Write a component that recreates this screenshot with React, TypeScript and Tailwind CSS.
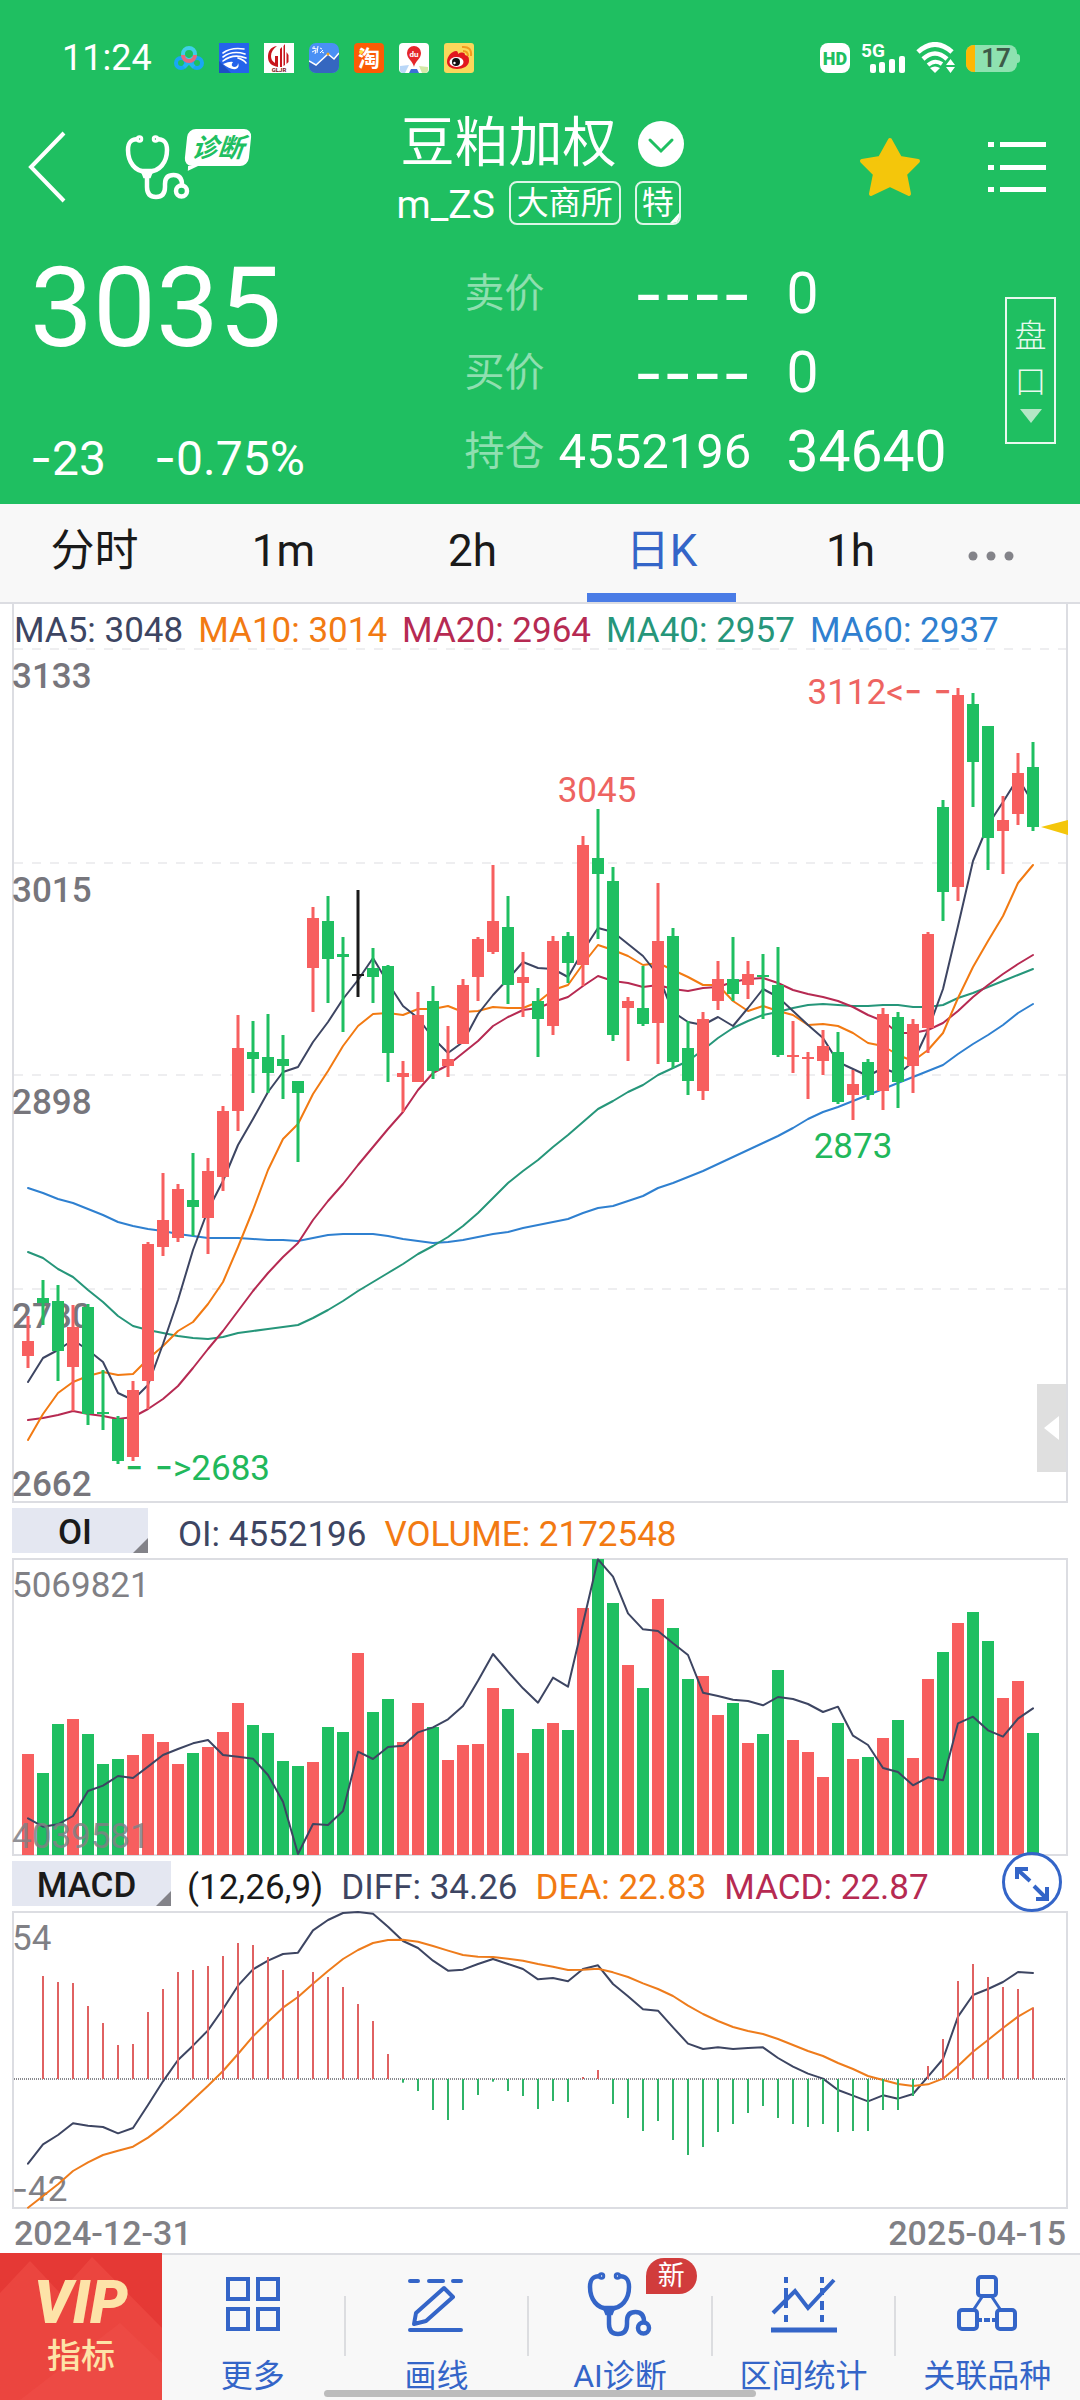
import React, { useState } from "react";
import clsx from "clsx";

const RED = "#f75f5f";
const GREEN = "#1fbf61";

// x of the first candle and the distance between two candles
const X0 = 28;
const STEP = 15;
const cx = (i: number) => X0 + i * STEP;

type Candle = [string, number, number, number, number];

// colour, high, body top, body bottom, low
// "d" is a flat day, drawn black
const candles: Candle[] = [
  ["r", 1316, 1341, 1356, 1368],
  ["g", 1280, 1298, 1303, 1325],
  ["g", 1285, 1301, 1351, 1381],
  ["r", 1305, 1327, 1367, 1411],
  ["g", 1304, 1307, 1414, 1425],
  ["g", 1370, 1412, 1414, 1430],
  ["g", 1416, 1419, 1461, 1464],
  ["r", 1381, 1390, 1457, 1461],
  ["r", 1242, 1244, 1381, 1409],
  ["r", 1173, 1220, 1247, 1256],
  ["r", 1184, 1189, 1238, 1242],
  ["g", 1153, 1200, 1207, 1236],
  ["r", 1158, 1171, 1218, 1254],
  ["r", 1106, 1111, 1177, 1191],
  ["r", 1015, 1048, 1111, 1131],
  ["g", 1021, 1052, 1059, 1093],
  ["g", 1014, 1057, 1073, 1093],
  ["g", 1035, 1059, 1066, 1099],
  ["g", 1081, 1081, 1093, 1162],
  ["r", 907, 918, 968, 1012],
  ["g", 896, 921, 959, 1003],
  ["g", 937, 954, 957, 1032],
  ["d", 890, 974, 976, 997],
  ["g", 948, 968, 977, 1003],
  ["g", 965, 966, 1053, 1082],
  ["r", 1061, 1073, 1077, 1112],
  ["r", 992, 1015, 1082, 1082],
  ["g", 986, 1001, 1071, 1079],
  ["r", 1026, 1059, 1066, 1077],
  ["r", 979, 985, 1044, 1044],
  ["r", 937, 939, 977, 1001],
  ["r", 865, 921, 952, 954],
  ["g", 896, 927, 985, 1004],
  ["r", 952, 977, 983, 1017],
  ["g", 988, 1001, 1019, 1057],
  ["r", 936, 941, 1026, 1035],
  ["g", 932, 936, 963, 983],
  ["r", 836, 845, 965, 986],
  ["g", 809, 858, 874, 939],
  ["g", 867, 881, 1035, 1041],
  ["r", 997, 1001, 1008, 1061],
  ["g", 966, 1008, 1024, 1026],
  ["r", 883, 941, 1023, 1064],
  ["g", 928, 936, 1062, 1068],
  ["g", 1021, 1048, 1081, 1095],
  ["r", 1012, 1019, 1091, 1100],
  ["r", 961, 979, 1001, 1010],
  ["g", 937, 979, 994, 1001],
  ["r", 961, 974, 985, 999],
  ["g", 954, 975, 977, 1019],
  ["g", 947, 985, 1055, 1057],
  ["r", 1021, 1055, 1057, 1073],
  ["r", 1052, 1057, 1059, 1099],
  ["r", 1030, 1046, 1061, 1075],
  ["g", 1032, 1052, 1102, 1104],
  ["r", 1070, 1084, 1095, 1120],
  ["g", 1059, 1062, 1095, 1100],
  ["r", 1008, 1014, 1091, 1110],
  ["g", 1012, 1017, 1082, 1108],
  ["r", 1019, 1024, 1066, 1093],
  ["r", 932, 934, 1028, 1053],
  ["g", 800, 807, 892, 921],
  ["r", 688, 695, 887, 901],
  ["g", 693, 704, 762, 807],
  ["g", 726, 726, 838, 870],
  ["r", 796, 820, 831, 874],
  ["r", 753, 773, 814, 825],
  ["g", 742, 767, 827, 831],
];

const averages = [
  {
    color: "#2f80d0",
    values: [
      1188, 1193, 1199, 1203, 1209, 1215, 1222, 1226, 1229, 1231, 1234, 1236,
      1238, 1238, 1238, 1239, 1240, 1240, 1241, 1238, 1235, 1234, 1234, 1234,
      1236, 1239, 1241, 1243, 1242, 1240, 1237, 1234, 1232, 1228, 1225, 1222,
      1219, 1213, 1208, 1206, 1201, 1196, 1188, 1183, 1177, 1171, 1164, 1157,
      1150, 1143, 1136, 1128, 1119, 1112, 1107, 1101, 1095, 1089, 1083, 1077,
      1071, 1065, 1054, 1044, 1035, 1025, 1013, 1004,
    ],
  },
  {
    color: "#26967a",
    values: [
      1252, 1258, 1269, 1277, 1290, 1302, 1316, 1326, 1330, 1333, 1336, 1338,
      1339, 1337, 1333, 1331, 1329, 1327, 1325, 1318, 1310, 1301, 1291, 1282,
      1273, 1264, 1254, 1246, 1237, 1226, 1213, 1198, 1183, 1171, 1160, 1147,
      1135, 1122, 1109, 1101, 1092, 1085, 1075, 1068, 1061, 1050, 1038, 1028,
      1021, 1015, 1012, 1008, 1005, 1004, 1005, 1006, 1006, 1005, 1005, 1007,
      1007, 1005, 998, 993, 987, 981, 975, 969,
    ],
  },
  {
    color: "#b62a52",
    values: [
      1420, 1418, 1415, 1411, 1414, 1416, 1419, 1417, 1409, 1399, 1386, 1368,
      1349, 1331, 1311, 1291, 1273, 1257, 1243, 1220, 1201, 1184, 1165, 1147,
      1129, 1112, 1090, 1073, 1065, 1053, 1041, 1026, 1017, 1010, 1008, 1002,
      997, 986, 976, 981, 983, 987, 985, 989, 991, 988, 987, 982, 979, 978,
      983, 990, 994, 997, 1001, 1007, 1015, 1021, 1033, 1033, 1030, 1023, 1011,
      997, 985, 974, 964, 955,
    ],
  },
  {
    color: "#f27a12",
    values: [
      1440, 1414, 1393, 1382, 1376, 1372, 1375, 1374, 1359, 1346, 1331, 1322,
      1304, 1282, 1247, 1210, 1170, 1139, 1124, 1094, 1071, 1046, 1026, 1014,
      1013, 1015, 1009, 1009, 1006, 1012, 1011, 1007, 1008, 1008, 1002, 990,
      985, 964, 945, 950, 956, 965, 963, 970, 977, 985, 985, 1001, 1011, 1006,
      1011, 1015, 1025, 1024, 1026, 1033, 1043, 1046, 1055, 1061, 1050, 1033,
      998, 967, 941, 916, 883, 865,
    ],
  },
  {
    color: "#3d4562",
    values: [
      1382, 1358, 1350, 1340, 1350, 1362, 1393, 1400, 1385, 1344, 1300, 1250,
      1210, 1181, 1145, 1119, 1092, 1072, 1067, 1042, 1022, 999, 980, 958, 983,
      1006, 1018, 1038, 1053, 1042, 1014, 995, 979, 962, 968, 969, 977, 951,
      928, 932, 944, 956, 975, 1012, 1022, 1025, 1017, 1026, 1008, 989, 997,
      1011, 1025, 1038, 1062, 1069, 1076, 1068, 1074, 1062, 1030, 989, 926, 861,
      825, 802, 778, 803,
    ],
  },
];

// the two lower panels are measured in thirds of a pixel from their own origin
const volumes = [
  762, 819, 672, 657, 702, 792, 777, 765, 702, 726, 792, 759, 741, 696, 609,
  675, 699, 783, 798, 786, 681, 696, 459, 636, 597, 726, 609, 681, 780, 735,
  732, 564, 627, 759, 687, 669, 690, 324, 177, 309, 495, 564, 297, 384, 537,
  528, 645, 609, 729, 702, 510, 720, 756, 831, 669, 777, 771, 714, 660, 774,
  537, 456, 369, 336, 423, 594, 543, 699,
].map((v) => 1500 + v / 3);

const openInterest = [
  955, 980, 973, 948, 873, 857, 828, 834, 800, 765, 747, 730, 720, 765, 770,
  776, 825, 905, 1062, 972, 975, 933, 755, 777, 741, 737, 697, 682, 658, 618,
  542, 462, 515, 565, 608, 533, 560, 370, 178, 230, 340, 388, 393, 430, 465,
  578, 588, 599, 603, 616, 591, 597, 612, 636, 620, 707, 735, 804, 816, 856,
  832, 841, 670, 650, 691, 710, 656, 625,
].map((v) => 1500 + v / 3);

const MACD_ZERO = 2079;

const histogram = [
  657, 348, 366, 369, 438, 489, 555, 552, 456, 387, 336, 330, 318, 288, 249,
  255, 291, 330, 393, 336, 351, 381, 432, 483, 582, 668, 693, 750, 780, 750,
  705, 665, 693, 708, 747, 723, 726, 651, 630, 732, 774, 813, 783, 840, 885,
  861, 816, 792, 759, 738, 774, 792, 801, 792, 816, 813, 813, 750, 750, 708,
  618, 537, 363, 312, 351, 381, 387, 444,
].map((v) => 1860 + v / 3);

const diff = [
  911, 853, 825, 790, 797, 801, 820, 804, 735, 664, 600, 557, 511, 447, 377,
  328, 302, 282, 278, 211, 180, 159, 156, 161, 200, 243, 264, 302, 332, 329,
  312, 297, 312, 327, 358, 354, 364, 327, 316, 372, 409, 448, 452, 502, 551,
  567, 562, 567, 564, 562, 594, 620, 641, 656, 690, 707, 724, 706, 716, 702,
  650, 597, 470, 405, 387, 366, 336, 339,
].map((v) => 1860 + v / 3);

const dea = [
  1043, 1008, 973, 933, 907, 885, 872, 860, 833, 799, 761, 719, 677, 633, 582,
  529, 485, 443, 411, 371, 333, 297, 270, 249, 240, 239, 245, 258, 272, 285,
  290, 291, 296, 302, 312, 320, 330, 329, 326, 337, 351, 370, 387, 408, 437,
  462, 483, 501, 513, 522, 537, 555, 573, 588, 609, 627, 648, 660, 672, 678,
  673, 656, 618, 575, 540, 504, 470, 444,
].map((v) => 1860 + v / 3);

function Line({ values, color }: { values: number[]; color: string }) {
  return (
    <polyline
      points={values.map((v, i) => `${cx(i)},${v}`).join(" ")}
      fill="none"
      stroke={color}
      strokeWidth="2"
      strokeLinejoin="round"
      strokeLinecap="round"
    />
  );
}

function Stethoscope() {
  return (
    <svg
      width="68"
      height="68"
      viewBox="0 0 68 68"
      fill="none"
      stroke="currentColor"
      strokeWidth="4.5"
    >
      <path d="M15 6C7 6 4 9 4 17C4 29 11 39 23 39C36 39 43 29 43 17C43 9 40 6 32 6" />
      <path d="M23 39V54Q23 64 32 64Q41 64 41 54V51Q41 42 49.500 42Q58 42 58 52" />
      <circle cx="57.500" cy="58" r="5.500" />
      <circle cx="15.500" cy="6" r="1.500" />
      <circle cx="31.500" cy="6" r="1.500" />
      <path d="M19 38h8l-2 5h-4z" />
    </svg>
  );
}

function AppIcons() {
  return (
    <div className="flex gap-[15px]">
      <svg width="30" height="30" viewBox="0 0 30 30" fill="none" strokeWidth="4">
        <circle cx="7" cy="20" r="5" stroke="#19a7f3" />
        <circle cx="23" cy="20" r="5" stroke="#19a7f3" />
        <path d="M10 24l9-9M20 24l-9-9" stroke="#25b4f0" />
        <circle cx="15" cy="11" r="6" stroke="#3fd0e8" />
        <path d="M9 12a6 6 0 0 0 12 0" stroke="#e8677f" />
      </svg>
      <svg width="30" height="30" viewBox="0 0 30 30">
        <rect width="30" height="30" fill="#2563eb" />
        <path d="M0 18l12 12H0z" fill="#1d4fc4" />
        <g fill="none" stroke="#fff" strokeWidth="1.600" strokeLinecap="round">
          <path d="M4 10Q12 4 25 6" />
          <path d="M4 14Q13 7 26 11" />
          <path d="M4 18Q14 10 27 15" />
          <path d="M19 15Q25 17 27 20" />
        </g>
        <path d="M4 21q7-3 10-2q-3 4 1 5q4 0 4-4q2 4-2 6q-6 1-13-5z" fill="#fff" />
      </svg>
      <svg width="30" height="30" viewBox="0 0 30 30">
        <rect width="30" height="30" fill="#fff" />
        <path
          d="M13 3C6 4 4 9 4 14c0 6 4 9 10 10V13h-3v7c-3-2-4-4-4-7c0-4 2-7 6-10z"
          fill="#c8161d"
        />
        <path
          d="M16 6l2-2v20h-2zM19.500 3l1.500-2v21l-1.500 1zM22.500 9l2 3v7l-2 2z"
          fill="#c8161d"
        />
        <text
          x="15"
          y="29"
          textAnchor="middle"
          fontSize="6"
          fontWeight="700"
          fill="#7a1014"
        >
          GLJR
        </text>
      </svg>
      <svg width="30" height="30" viewBox="0 0 30 30">
        <rect width="30" height="30" rx="7" fill="#4a90f5" />
        <path
          d="M0 18l7 4l12-11l6 5l5-5v12a7 7 0 0 1-7 7H7a7 7 0 0 1-7-7z"
          fill="#3567c0"
        />
        <path d="M0 18l7 4l12-11l6 5l5-6" stroke="#fff" fill="none" strokeWidth="1.500" />
        <path
          d="M3 5l5 1M3 9l4-2l-1 4M5 3v3M9 3l-1 7M11 5l2 1M11 10l3-3M13 9l2 1"
          stroke="#fff"
          fill="none"
        />
        <circle cx="19" cy="11" r="1.500" fill="#f5a623" />
      </svg>
      <svg width="30" height="30" viewBox="0 0 30 30">
        <rect width="30" height="30" rx="4" fill="#fc5b05" />
        <text x="4" y="23" fontSize="22" fontWeight="700" fill="#fff">
          淘
        </text>
        <circle cx="7" cy="9" r="2" fill="#fde047" />
      </svg>
      <svg width="30" height="30" viewBox="0 0 30 30">
        <rect width="30" height="30" rx="4" fill="#fff" />
        <path d="M1 23l9-1l-4 8H4q-3 0-3-3z" fill="#b9d7f8" />
        <path d="M20 23l9 1v3q0 3-3 3h-3z" fill="#d5e8a8" />
        <path d="M12 26h6l2 4h-10z" fill="#3b6fd8" />
        <path d="M15 24C14 18 8 16 8 10a7 7 0 0 1 14 0c0 6-6 8-7 14z" fill="#e5262b" />
        <text x="15" y="14" textAnchor="middle" fontSize="8" fontWeight="700" fill="#fff">
          du
        </text>
      </svg>
      <svg width="30" height="30" viewBox="0 0 30 30">
        <rect width="30" height="30" rx="3" fill="#fbd75b" />
        <path
          d="M3 19C3 13 8 8 12 8c2 0 2 2 2 3c3-2 7-2 7 1c4 1 4 3 4 6c0 5-6 8-12 8S3 23 3 19z"
          fill="#e2171f"
        />
        <ellipse cx="12.500" cy="19" rx="7" ry="5" fill="#fff" />
        <circle cx="12" cy="19" r="4" fill="#111" />
        <circle cx="10.500" cy="20" r="1.200" fill="#fff" />
        <path
          d="M19 8q5 0 5 5M18 4q10-1 9 9"
          stroke="#f39a1e"
          strokeWidth="2"
          fill="none"
        />
      </svg>
    </div>
  );
}

function StatusBar() {
  return (
    <div className="flex h-[112px] items-center justify-between pt-1 pr-[60px] pl-[62px]">
      <div className="flex items-center gap-[22px]">
        <span className="text-[36px] leading-[40px]">11:24</span>
        <AppIcons />
      </div>
      <div className="flex items-center gap-[11px]">
        <span className="flex h-[30px] w-[30px] items-center justify-center rounded-lg bg-white text-[18px] font-black text-[#1fbf61]">
          HD
        </span>
        <div className="relative h-[30px] w-[44px]">
          <span className="absolute -top-[3px] left-0 text-[19px] leading-[22px] font-bold">
            5G
          </span>
          <svg
            className="absolute right-0 bottom-0"
            width="35"
            height="17"
            viewBox="0 0 35 17"
            fill="#fff"
          >
            <rect x="0" y="8" width="6" height="9" rx="2" />
            <rect x="9" y="6" width="6" height="11" rx="2" />
            <rect x="19" y="3" width="6" height="14" rx="2" />
            <rect x="29" y="0" width="6" height="17" rx="2" />
          </svg>
        </div>
        <svg width="39" height="32" viewBox="0 0 39 32" fill="none" stroke="#fff">
          <path d="M2 10Q19-5 36 10" strokeWidth="5" />
          <path d="M7 17Q19 6 31 17" strokeWidth="4.500" />
          <path d="M12 23Q19 17 26 22" strokeWidth="4" />
          <path d="M14 26q5-3 10 0l-5 5z" fill="#fff" stroke="none" />
          <path d="M30 23l4.500-6l4.500 6zM30 25l4.500 6l4.500-6z" fill="#fff" stroke="none" />
        </svg>
        <div className="flex items-center">
          <div className="flex h-[27px] w-[51px] items-center overflow-hidden rounded-lg bg-[#8ee2b0]">
            <span className="h-full w-[9px] bg-[#ffb703]" />
            <span className="flex-1 text-center text-[26px] leading-[27px] font-semibold text-[#3c5a48]">
              17
            </span>
          </div>
          <span className="h-[9px] w-[3px] rounded-r bg-[#8ee2b0]" />
        </div>
      </div>
    </div>
  );
}

function TitleBar() {
  return (
    <div className="grid h-[108px] grid-cols-[1fr_auto_1fr] items-center">
      <div className="flex items-center pb-[5px] pl-7">
        <button aria-label="返回">
          <svg width="38" height="72" viewBox="0 0 38 72" fill="none">
            <path d="M36 2L3 36L36 70" stroke="#fff" strokeWidth="4" />
          </svg>
        </button>
        <button className="ml-[58px] flex items-start">
          <Stethoscope />
          <span className="relative -mt-1 -ml-[6px] flex h-[37px] w-16 -skew-x-6 items-center justify-center rounded-lg bg-white text-[26px] leading-9 font-bold text-[#1fbf61] italic">
            诊断
            <svg
              className="absolute top-full left-1"
              width="10"
              height="5"
              viewBox="0 0 10 5"
            >
              <path d="M0 0h10L0 5z" fill="#fff" />
            </svg>
          </span>
        </button>
      </div>
      <div className="flex flex-col gap-[6px] pt-[3px]">
        <div className="flex items-center gap-[21px] pl-1">
          <h1 className="text-[54px] leading-[58px]">豆粕加权</h1>
          <button aria-label="切换">
            <svg width="46" height="46" viewBox="0 0 46 46" fill="none">
              <circle cx="23" cy="23" r="23" fill="#fff" />
              <path
                d="M12 19l11 11l11-11"
                stroke="#1fbf61"
                strokeWidth="3"
                strokeLinecap="round"
              />
            </svg>
          </button>
        </div>
        <div className="flex items-center gap-[14px]">
          <span className="pt-1 text-[39px] leading-[44px]">m_ZS</span>
          <span className="flex h-[44px] items-center rounded-lg border-2 border-white/85 px-[6px] text-[32px] leading-[40px]">
            大商所
          </span>
          <span className="relative flex h-[44px] items-center overflow-hidden rounded-lg border-2 border-white/85 px-[5px] text-[32px] leading-[40px]">
            特
            <svg
              className="absolute right-0 bottom-0"
              width="9"
              height="10"
              viewBox="0 0 9 10"
            >
              <path d="M9 0v10H0z" fill="#fff" />
            </svg>
          </span>
        </div>
      </div>
      <div className="flex items-center justify-end gap-[66px] pr-[34px] pb-[5px]">
        <button aria-label="自选">
          <svg width="64" height="62" viewBox="0 0 64 62">
            <path
              d="M32 4L42 22L60 25L47 38L51 58L32 49L13 58L17 38L4 25L22 22Z"
              fill="#f4c60b"
              stroke="#f4c60b"
              strokeWidth="4"
              strokeLinejoin="round"
            />
          </svg>
        </button>
        <button aria-label="菜单">
          <svg width="58" height="54" viewBox="0 0 58 54" fill="#fff">
            {[2, 25, 47].map((y) => (
              <g key={y}>
                <rect x="0" y={y} width="6" height="5" />
                <rect x="12" y={y} width="46" height="5" />
              </g>
            ))}
          </svg>
        </button>
      </div>
    </div>
  );
}

const quoteRows = [
  { label: "卖价", value: "----", count: "0" },
  { label: "买价", value: "----", count: "0" },
  { label: "持仓", value: "4552196", count: "34640" },
];

function Quote() {
  return (
    <div className="flex h-[284px] items-start pt-[34px] pb-[17px]">
      <div className="flex h-full w-[43%] flex-col justify-between pl-[30px]">
        <span className="pt-[2px] text-[112px] leading-[104px]">3035</span>
        <div className="flex gap-12 text-[48px] leading-[56px]">
          <span>
            <span className="font-['Inter']">-</span>23
          </span>
          <span>
            <span className="font-['Inter']">-</span>0.75%
          </span>
        </div>
      </div>
      <div className="flex flex-col">
        {quoteRows.map(({ label, value, count }) => (
          <div key={label} className="flex h-[79px] items-center">
            <span className="w-20 text-[40px] whitespace-nowrap text-white/50">
              {label}
            </span>
            <span
              className={clsx(
                "w-[207px] text-right",
                value === "----" ? "font-['Inter'] text-[64px]" : "text-[49px]",
              )}
            >
              {value}
            </span>
            <span className="ml-[35px] text-[57px]">{count}</span>
          </div>
        ))}
      </div>
      <button className="mt-[43px] mr-6 ml-auto flex h-[147px] w-[51px] flex-col items-center border-2 border-white/90 pt-[14px] text-[32px] leading-[46px] font-light text-white/90">
        <span>盘</span>
        <span>口</span>
        <svg className="mt-1" width="22" height="14" viewBox="0 0 22 14">
          <path d="M0 0h22L11 14z" fill="#b4e7c6" />
        </svg>
      </button>
    </div>
  );
}

const periods = ["分时", "1m", "2h", "日K", "1h"];

function Periods() {
  const [active, setActive] = useState("日K");

  return (
    <nav className="flex h-[100px] border-b-2 border-[#dcdde2] bg-[#f8f8f8]">
      {periods.map((e) => (
        <button
          key={e}
          onClick={() => setActive(e)}
          className={clsx(
            "relative w-[17.5%] pb-1 text-[44px]",
            e === active ? "text-[#3465c8]" : "text-[#1a1a1a]",
          )}
        >
          {e}
          {e === active && (
            <span className="absolute inset-x-5 bottom-0 h-[9px] bg-[#4a7ce6]" />
          )}
        </button>
      ))}
      <button
        aria-label="更多周期"
        className="flex w-[8.5%] items-center justify-center pt-[6px]"
      >
        <svg width="46" height="10" viewBox="0 0 46 10" fill="#838389">
          <circle cx="5" cy="5" r="4.500" />
          <circle cx="23" cy="5" r="4.500" />
          <circle cx="41" cy="5" r="4.500" />
        </svg>
      </button>
    </nav>
  );
}

function PriceChart() {
  return (
    <section className="relative mx-3 border-x-2 border-b-2 border-[#dcdde2]">
      <div className="flex h-[44px] items-end gap-[15px] text-[35px] leading-[34px] whitespace-nowrap">
        <span className="text-[#3d4562]">MA5: 3048</span>
        <span className="text-[#f27a12]">MA10: 3014</span>
        <span className="text-[#b62a52]">MA20: 2964</span>
        <span className="text-[#26967a]">MA40: 2957</span>
        <span className="text-[#2f80d0]">MA60: 2937</span>
      </div>
      <svg className="block w-full overflow-visible" viewBox="14 648 1052 853">
        {[649, 863, 1075, 1289].map((y) => (
          <line
            key={y}
            x1="14"
            x2="1066"
            y1={y}
            y2={y}
            stroke="#eeeef0"
            strokeWidth="2"
            strokeDasharray="9 9"
          />
        ))}
        <g fontSize="35" fontWeight="500" fill="#77767c">
          <text x="12" y="688">3133</text>
          <text x="12" y="902">3015</text>
          <text x="12" y="1114">2898</text>
          <text x="12" y="1328">2780</text>
          <text x="12" y="1496">2662</text>
        </g>
        {averages.map((e) => (
          <Line key={e.color} values={e.values} color={e.color} />
        ))}
        {candles.map(([kind, high, top, bottom, low], i) => {
          const color = kind === "r" ? RED : kind === "g" ? GREEN : "#1a1a1a";
          return (
            <g key={i} fill={color}>
              <rect x={cx(i) - 1.5} y={high} width="3" height={low - high} />
              <rect x={cx(i) - 6} y={top} width="12" height={bottom - top} />
            </g>
          );
        })}
        <g fontSize="35">
          <text x="597" y="802" textAnchor="middle" fill="#ee6461">3045</text>
          <text x="853" y="1158" textAnchor="middle" fill="#21b85b">2873</text>
          <text x="952" y="704" textAnchor="end" fill="#ee6461">
            3112&lt;
            <tspan className="font-['Inter']" fontSize="40">- -</tspan>
          </text>
          <text x="125" y="1480" fill="#21b85b">
            <tspan className="font-['Inter']" fontSize="40">- -</tspan>
            &gt;2683
          </text>
        </g>
        <path d="M1041 827l27-7v15z" fill="#f4c60b" />
      </svg>
      <button
        aria-label="展开"
        className="absolute right-0 bottom-[29px] flex h-[88px] w-[29px] items-center justify-center bg-[#dfdfdf]"
      >
        <svg width="15" height="24" viewBox="0 0 15 24">
          <path d="M15 0v24L0 12z" fill="#fff" />
        </svg>
      </button>
    </section>
  );
}

function IndicatorTab({ name, wide }: { name: string; wide?: boolean }) {
  return (
    <button
      className={clsx(
        "relative h-[45px] bg-[#e4e7f1] pt-1 text-[35px] leading-[41px] font-medium text-[#1a1a1a]",
        wide ? "w-[159px] pr-[10px]" : "w-[136px] pr-[10px]",
      )}
    >
      {name}
      <svg
        className="absolute right-0 bottom-0"
        width="15"
        height="15"
        viewBox="0 0 15 15"
      >
        <path d="M15 0v15H0z" fill="#838389" />
      </svg>
    </button>
  );
}

function VolumeChart() {
  return (
    <section className="mx-3">
      <div className="flex h-[55px] items-center">
        <IndicatorTab name="OI" />
        <div className="ml-[30px] flex gap-[18px] pt-2 text-[35px] leading-9 whitespace-nowrap">
          <span className="text-[#3d4562]">OI: 4552196</span>
          <span className="text-[#f27a12]">VOLUME: 2172548</span>
        </div>
      </div>
      <div className="border-2 border-[#dcdde2]">
        <svg className="block w-full overflow-visible" viewBox="14 1560 1052 294">
          {volumes.map((top, i) => (
            <rect
              key={i}
              x={cx(i) - 6}
              y={top}
              width="12"
              height={1855 - top}
              fill={candles[i][0] === "g" ? GREEN : RED}
            />
          ))}
          <Line values={openInterest} color="#3d4562" />
          <g fontSize="35" fill="#808085">
            <text x="12" y="1597">5069821</text>
            <text x="12" y="1848" opacity="0.85">4039581</text>
          </g>
        </svg>
      </div>
    </section>
  );
}

function MacdChart() {
  return (
    <section className="relative mx-3">
      <div className="flex h-[55px] items-center">
        <IndicatorTab name="MACD" wide />
        <div className="ml-4 flex gap-[18px] pt-2 text-[35px] leading-9 whitespace-nowrap">
          <span className="text-[#1a1a1a]">(12,26,9)</span>
          <span className="text-[#3d4562]">DIFF: 34.26</span>
          <span className="text-[#f27a12]">DEA: 22.83</span>
          <span className="text-[#b62a52]">MACD: 22.87</span>
        </div>
      </div>
      <div className="border-2 border-[#dcdde2]">
        <svg className="block w-full overflow-visible" viewBox="14 1913 1052 294">
          <line
            x1="14"
            x2="1066"
            y1={MACD_ZERO}
            y2={MACD_ZERO}
            stroke="#8a8a8e"
            strokeWidth="2"
            strokeDasharray="1 1"
          />
          <g fontSize="35" fill="#808085">
            <text x="12" y="1950">54</text>
            <text x="12" y="2201">
              <tspan className="font-['Inter']">-</tspan>42
            </text>
          </g>
          <Line values={diff} color="#3d4562" />
          <Line values={dea} color="#ee7c1c" />
          {histogram.map((y, i) => (
            <rect
              key={i}
              x={cx(i) - 1}
              y={Math.min(y, MACD_ZERO)}
              width="2"
              height={Math.abs(y - MACD_ZERO)}
              fill={y < MACD_ZERO ? "#e06262" : "#2fb468"}
            />
          ))}
        </svg>
      </div>
      <button aria-label="全屏" className="absolute -top-1 right-[6px]">
        <svg width="60" height="60" viewBox="0 0 60 60" fill="none" stroke="#3465c8">
          <circle cx="30" cy="30" r="28.500" strokeWidth="3" />
          <path d="M15 27V17H26M16 18L28 29M32 34L44 46M34 47H45V35" strokeWidth="4" />
        </svg>
      </button>
    </section>
  );
}

const tools = [
  {
    label: "更多",
    icon: (
      <g strokeWidth="4">
        <rect x="9" y="9" width="20" height="20" />
        <rect x="39" y="9" width="20" height="20" />
        <rect x="9" y="39" width="20" height="20" />
        <rect x="39" y="39" width="20" height="20" />
      </g>
    ),
  },
  {
    label: "画线",
    icon: (
      <g strokeWidth="4" strokeLinecap="round">
        <path d="M8 11h8M27 11h14M51 11h8M8 60h51" />
        <path d="M12 54l2-11L42 18l9 9L24 51z" strokeLinejoin="round" />
      </g>
    ),
  },
  { label: "AI诊断", icon: null },
  {
    label: "区间统计",
    icon: (
      <g strokeWidth="4">
        <path d="M1 60h66" strokeWidth="5" />
        <path d="M3 43L25 21L38 38L64 10" />
        <path d="M16 7v6M16 18v20M16 45v7M52 7v6M52 18v7M52 31v9M52 45v7" />
      </g>
    ),
  },
  {
    label: "关联品种",
    icon: (
      <g strokeWidth="4">
        <rect x="25" y="7" width="18" height="19" rx="3" />
        <rect x="6" y="40" width="18" height="19" rx="3" />
        <rect x="44" y="40" width="18" height="19" rx="3" />
        <path d="M29 27l-8 12M39 27l8 12" strokeWidth="3" />
        <path d="M25 50h4M31 50h6M39 50h4" />
      </g>
    ),
  },
];

function BottomBar() {
  return (
    <footer className="relative flex h-[147px] border-t-2 border-[#dcdde2] bg-[#f8f8f8]">
      <button className="relative -mt-[2px] flex w-[15%] flex-col items-center overflow-hidden bg-[#e53935] pt-5 text-[#fde3a8]">
        <svg
          className="absolute inset-0 h-full w-full"
          viewBox="0 0 162 147"
          preserveAspectRatio="none"
        >
          <path d="M0 40L30 8L60 40L92 4L162 75V147H0z" fill="#f2544c" opacity="0.45" />
          <path d="M20 147L120 70L162 110V147z" fill="#f2544c" opacity="0.35" />
        </svg>
        <span className="relative text-[60px] leading-[60px] font-black italic">
          VIP
        </span>
        <span className="relative text-[34px] leading-[46px] font-medium">
          指标
        </span>
      </button>
      {tools.map(({ label, icon }, i) => (
        <button
          key={label}
          className="relative flex flex-1 flex-col items-center pt-[15px] pr-[2px] text-[32px] leading-[40px] whitespace-nowrap text-[#3465c8]"
        >
          {i > 0 && (
            <span className="absolute top-[41px] -left-[2px] h-[60px] w-[2px] bg-[#dcdde0]" />
          )}
          {icon ? (
            <svg width="68" height="68" viewBox="0 0 68 68" fill="none" stroke="currentColor">
              {icon}
            </svg>
          ) : (
            <Stethoscope />
          )}
          <span className="mt-[18px]">{label}</span>
          {!icon && (
            <span className="absolute top-[3px] right-4 rounded-[18px] rounded-bl-none bg-[#d13c3c] px-3 text-[27px] leading-9 text-white">
              新
            </span>
          )}
        </button>
      ))}
      <span className="absolute bottom-[3px] left-[30%] h-[7px] w-[40%] rounded-full bg-[#bcbcbc]" />
    </footer>
  );
}

export default function App() {
  return (
    <div className="w-full overflow-x-hidden bg-white font-['Roboto','Noto_Sans_CJK_SC',sans-serif]">
      <header className="bg-[#1fbf61] text-white">
        <StatusBar />
        <TitleBar />
        <Quote />
      </header>
      <Periods />
      <main>
        <PriceChart />
        <VolumeChart />
        <MacdChart />
        <div className="mx-[14px] flex h-[44px] items-center justify-between pt-1 text-[34px] leading-[40px] font-medium text-[#808085]">
          <span>2024-12-31</span>
          <span>2025-04-15</span>
        </div>
      </main>
      <BottomBar />
    </div>
  );
}
